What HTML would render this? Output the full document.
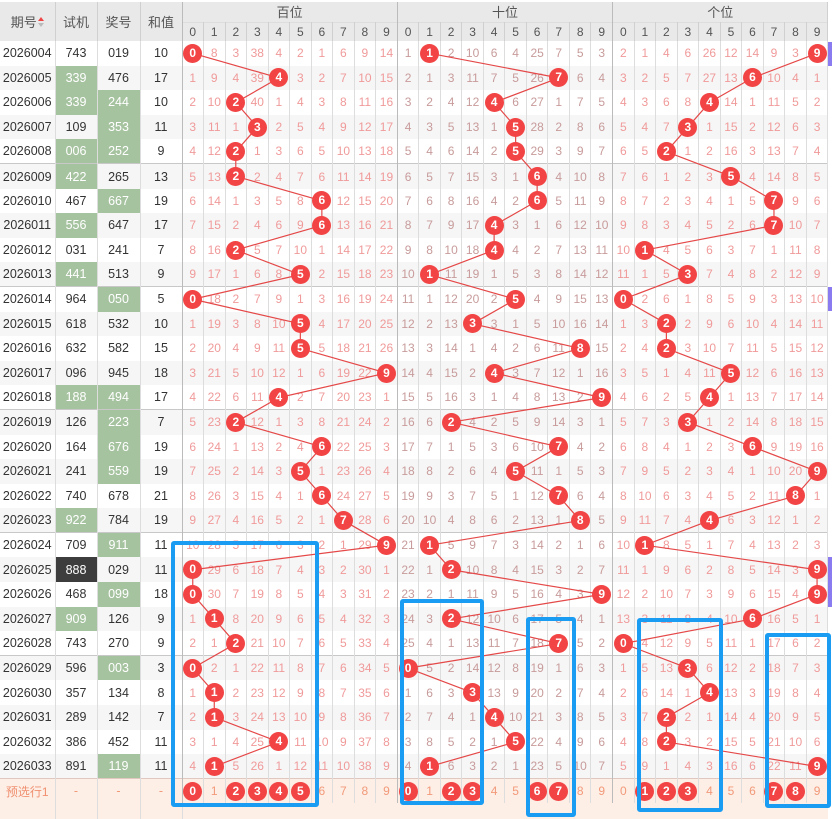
<!DOCTYPE html>
<html><head><meta charset="utf-8">
<style>
*{margin:0;padding:0;box-sizing:border-box}
body{width:832px;height:814px;overflow:hidden;background:#fff;font-family:"Liberation Sans","Noto Sans CJK SC",sans-serif;position:relative}
table{border-collapse:collapse;table-layout:fixed;width:828px;position:absolute;left:0;top:2px}
td,th{text-align:center;font-size:12px;padding:0;border-right:1px solid #ddd;white-space:nowrap;overflow:visible}
th{background:#e9e9e9;color:#555;font-weight:normal;border-right:1px solid #d0d0d0}
tr.h1 th{height:20px;font-size:13px}
tr.h2 th{height:19px;font-size:12px;border-top:1px solid #ddd}
tr.d td{height:24.6px;color:#f09a9a}
tr.d td:nth-child(-n+4){color:#333;font-size:12.5px}
tr.d:nth-child(even) td{background:#f6f6f6}
tr.d td:nth-child(n+15):nth-child(-n+24){color:#c89b9b}
tr.d td:nth-child(14),tr.d td:nth-child(24),th.gs{border-right:1px solid #bbb}
tr.d td:nth-child(4){border-right:1px solid #bbb}
tr.s td{border-top:1px solid #c8c8c8}
tr.d td.g{background:#a6c3a0 !important;color:#fff !important}
tr.d td.k{background:#3d3d3d !important;color:#fff !important}
td b{display:inline-block;width:19px;height:19px;border-radius:50%;background:#f24444;color:#fff;line-height:19px;font-size:12px;font-weight:bold;position:relative;z-index:2}
tr.p td{background:#fdeee6 !important;color:#f29a7a !important;border-top:1px solid #e0c8c0}
tr.p td:first-child{color:#f09070 !important;font-size:12px}
tr.e td{background:#fdeee6;height:16px}
.arr{display:inline-block;width:6px;vertical-align:middle;margin-left:1px}
svg#ln{position:absolute;left:0;top:0;z-index:1;pointer-events:none}
.bx{position:absolute;border:4px solid #1a9cf2;border-radius:3px;z-index:3}
.pu{position:absolute;left:828px;width:4px;background:#8a7cf0}
</style></head><body>
<svg id="ln" width="832" height="814"></svg>
<table>
<colgroup><col style="width:55px"><col style="width:42px"><col style="width:43px"><col style="width:42px">
<col span="30" style="width:21.53px"></colgroup>
<tr class="h1"><th rowspan="2">期号<span class="arr"><svg width="6" height="12"><path d="M0 5L3 1L6 5Z" fill="#e44"/><path d="M0 7L3 11L6 7Z" fill="#bbb"/></svg></span></th><th rowspan="2">试机</th><th rowspan="2">奖号</th><th rowspan="2" class="gs">和值</th><th colspan="10" class="gs">百位</th><th colspan="10" class="gs">十位</th><th colspan="10">个位</th></tr>
<tr class="h2"><th>0</th><th>1</th><th>2</th><th>3</th><th>4</th><th>5</th><th>6</th><th>7</th><th>8</th><th class="gs">9</th><th>0</th><th>1</th><th>2</th><th>3</th><th>4</th><th>5</th><th>6</th><th>7</th><th>8</th><th class="gs">9</th><th>0</th><th>1</th><th>2</th><th>3</th><th>4</th><th>5</th><th>6</th><th>7</th><th>8</th><th>9</th></tr>
<tr class="d"><td>2026004</td><td>743</td><td>019</td><td>10</td><td><b>0</b></td><td>8</td><td>3</td><td>38</td><td>4</td><td>2</td><td>1</td><td>6</td><td>9</td><td>14</td><td>1</td><td><b>1</b></td><td>2</td><td>10</td><td>6</td><td>4</td><td>25</td><td>7</td><td>5</td><td>3</td><td>2</td><td>1</td><td>4</td><td>6</td><td>26</td><td>12</td><td>14</td><td>9</td><td>3</td><td><b>9</b></td></tr>
<tr class="d"><td>2026005</td><td class="g">339</td><td>476</td><td>17</td><td>1</td><td>9</td><td>4</td><td>39</td><td><b>4</b></td><td>3</td><td>2</td><td>7</td><td>10</td><td>15</td><td>2</td><td>1</td><td>3</td><td>11</td><td>7</td><td>5</td><td>26</td><td><b>7</b></td><td>6</td><td>4</td><td>3</td><td>2</td><td>5</td><td>7</td><td>27</td><td>13</td><td><b>6</b></td><td>10</td><td>4</td><td>1</td></tr>
<tr class="d"><td>2026006</td><td class="g">339</td><td class="g">244</td><td>10</td><td>2</td><td>10</td><td><b>2</b></td><td>40</td><td>1</td><td>4</td><td>3</td><td>8</td><td>11</td><td>16</td><td>3</td><td>2</td><td>4</td><td>12</td><td><b>4</b></td><td>6</td><td>27</td><td>1</td><td>7</td><td>5</td><td>4</td><td>3</td><td>6</td><td>8</td><td><b>4</b></td><td>14</td><td>1</td><td>11</td><td>5</td><td>2</td></tr>
<tr class="d"><td>2026007</td><td>109</td><td class="g">353</td><td>11</td><td>3</td><td>11</td><td>1</td><td><b>3</b></td><td>2</td><td>5</td><td>4</td><td>9</td><td>12</td><td>17</td><td>4</td><td>3</td><td>5</td><td>13</td><td>1</td><td><b>5</b></td><td>28</td><td>2</td><td>8</td><td>6</td><td>5</td><td>4</td><td>7</td><td><b>3</b></td><td>1</td><td>15</td><td>2</td><td>12</td><td>6</td><td>3</td></tr>
<tr class="d"><td>2026008</td><td class="g">006</td><td class="g">252</td><td>9</td><td>4</td><td>12</td><td><b>2</b></td><td>1</td><td>3</td><td>6</td><td>5</td><td>10</td><td>13</td><td>18</td><td>5</td><td>4</td><td>6</td><td>14</td><td>2</td><td><b>5</b></td><td>29</td><td>3</td><td>9</td><td>7</td><td>6</td><td>5</td><td><b>2</b></td><td>1</td><td>2</td><td>16</td><td>3</td><td>13</td><td>7</td><td>4</td></tr>
<tr class="d s"><td>2026009</td><td class="g">422</td><td>265</td><td>13</td><td>5</td><td>13</td><td><b>2</b></td><td>2</td><td>4</td><td>7</td><td>6</td><td>11</td><td>14</td><td>19</td><td>6</td><td>5</td><td>7</td><td>15</td><td>3</td><td>1</td><td><b>6</b></td><td>4</td><td>10</td><td>8</td><td>7</td><td>6</td><td>1</td><td>2</td><td>3</td><td><b>5</b></td><td>4</td><td>14</td><td>8</td><td>5</td></tr>
<tr class="d"><td>2026010</td><td>467</td><td class="g">667</td><td>19</td><td>6</td><td>14</td><td>1</td><td>3</td><td>5</td><td>8</td><td><b>6</b></td><td>12</td><td>15</td><td>20</td><td>7</td><td>6</td><td>8</td><td>16</td><td>4</td><td>2</td><td><b>6</b></td><td>5</td><td>11</td><td>9</td><td>8</td><td>7</td><td>2</td><td>3</td><td>4</td><td>1</td><td>5</td><td><b>7</b></td><td>9</td><td>6</td></tr>
<tr class="d"><td>2026011</td><td class="g">556</td><td>647</td><td>17</td><td>7</td><td>15</td><td>2</td><td>4</td><td>6</td><td>9</td><td><b>6</b></td><td>13</td><td>16</td><td>21</td><td>8</td><td>7</td><td>9</td><td>17</td><td><b>4</b></td><td>3</td><td>1</td><td>6</td><td>12</td><td>10</td><td>9</td><td>8</td><td>3</td><td>4</td><td>5</td><td>2</td><td>6</td><td><b>7</b></td><td>10</td><td>7</td></tr>
<tr class="d"><td>2026012</td><td>031</td><td>241</td><td>7</td><td>8</td><td>16</td><td><b>2</b></td><td>5</td><td>7</td><td>10</td><td>1</td><td>14</td><td>17</td><td>22</td><td>9</td><td>8</td><td>10</td><td>18</td><td><b>4</b></td><td>4</td><td>2</td><td>7</td><td>13</td><td>11</td><td>10</td><td><b>1</b></td><td>4</td><td>5</td><td>6</td><td>3</td><td>7</td><td>1</td><td>11</td><td>8</td></tr>
<tr class="d"><td>2026013</td><td class="g">441</td><td>513</td><td>9</td><td>9</td><td>17</td><td>1</td><td>6</td><td>8</td><td><b>5</b></td><td>2</td><td>15</td><td>18</td><td>23</td><td>10</td><td><b>1</b></td><td>11</td><td>19</td><td>1</td><td>5</td><td>3</td><td>8</td><td>14</td><td>12</td><td>11</td><td>1</td><td>5</td><td><b>3</b></td><td>7</td><td>4</td><td>8</td><td>2</td><td>12</td><td>9</td></tr>
<tr class="d s"><td>2026014</td><td>964</td><td class="g">050</td><td>5</td><td><b>0</b></td><td>18</td><td>2</td><td>7</td><td>9</td><td>1</td><td>3</td><td>16</td><td>19</td><td>24</td><td>11</td><td>1</td><td>12</td><td>20</td><td>2</td><td><b>5</b></td><td>4</td><td>9</td><td>15</td><td>13</td><td><b>0</b></td><td>2</td><td>6</td><td>1</td><td>8</td><td>5</td><td>9</td><td>3</td><td>13</td><td>10</td></tr>
<tr class="d"><td>2026015</td><td>618</td><td>532</td><td>10</td><td>1</td><td>19</td><td>3</td><td>8</td><td>10</td><td><b>5</b></td><td>4</td><td>17</td><td>20</td><td>25</td><td>12</td><td>2</td><td>13</td><td><b>3</b></td><td>3</td><td>1</td><td>5</td><td>10</td><td>16</td><td>14</td><td>1</td><td>3</td><td><b>2</b></td><td>2</td><td>9</td><td>6</td><td>10</td><td>4</td><td>14</td><td>11</td></tr>
<tr class="d"><td>2026016</td><td>632</td><td>582</td><td>15</td><td>2</td><td>20</td><td>4</td><td>9</td><td>11</td><td><b>5</b></td><td>5</td><td>18</td><td>21</td><td>26</td><td>13</td><td>3</td><td>14</td><td>1</td><td>4</td><td>2</td><td>6</td><td>11</td><td><b>8</b></td><td>15</td><td>2</td><td>4</td><td><b>2</b></td><td>3</td><td>10</td><td>7</td><td>11</td><td>5</td><td>15</td><td>12</td></tr>
<tr class="d"><td>2026017</td><td>096</td><td>945</td><td>18</td><td>3</td><td>21</td><td>5</td><td>10</td><td>12</td><td>1</td><td>6</td><td>19</td><td>22</td><td><b>9</b></td><td>14</td><td>4</td><td>15</td><td>2</td><td><b>4</b></td><td>3</td><td>7</td><td>12</td><td>1</td><td>16</td><td>3</td><td>5</td><td>1</td><td>4</td><td>11</td><td><b>5</b></td><td>12</td><td>6</td><td>16</td><td>13</td></tr>
<tr class="d"><td>2026018</td><td class="g">188</td><td class="g">494</td><td>17</td><td>4</td><td>22</td><td>6</td><td>11</td><td><b>4</b></td><td>2</td><td>7</td><td>20</td><td>23</td><td>1</td><td>15</td><td>5</td><td>16</td><td>3</td><td>1</td><td>4</td><td>8</td><td>13</td><td>2</td><td><b>9</b></td><td>4</td><td>6</td><td>2</td><td>5</td><td><b>4</b></td><td>1</td><td>13</td><td>7</td><td>17</td><td>14</td></tr>
<tr class="d s"><td>2026019</td><td>126</td><td class="g">223</td><td>7</td><td>5</td><td>23</td><td><b>2</b></td><td>12</td><td>1</td><td>3</td><td>8</td><td>21</td><td>24</td><td>2</td><td>16</td><td>6</td><td><b>2</b></td><td>4</td><td>2</td><td>5</td><td>9</td><td>14</td><td>3</td><td>1</td><td>5</td><td>7</td><td>3</td><td><b>3</b></td><td>1</td><td>2</td><td>14</td><td>8</td><td>18</td><td>15</td></tr>
<tr class="d"><td>2026020</td><td>164</td><td class="g">676</td><td>19</td><td>6</td><td>24</td><td>1</td><td>13</td><td>2</td><td>4</td><td><b>6</b></td><td>22</td><td>25</td><td>3</td><td>17</td><td>7</td><td>1</td><td>5</td><td>3</td><td>6</td><td>10</td><td><b>7</b></td><td>4</td><td>2</td><td>6</td><td>8</td><td>4</td><td>1</td><td>2</td><td>3</td><td><b>6</b></td><td>9</td><td>19</td><td>16</td></tr>
<tr class="d"><td>2026021</td><td>241</td><td class="g">559</td><td>19</td><td>7</td><td>25</td><td>2</td><td>14</td><td>3</td><td><b>5</b></td><td>1</td><td>23</td><td>26</td><td>4</td><td>18</td><td>8</td><td>2</td><td>6</td><td>4</td><td><b>5</b></td><td>11</td><td>1</td><td>5</td><td>3</td><td>7</td><td>9</td><td>5</td><td>2</td><td>3</td><td>4</td><td>1</td><td>10</td><td>20</td><td><b>9</b></td></tr>
<tr class="d"><td>2026022</td><td>740</td><td>678</td><td>21</td><td>8</td><td>26</td><td>3</td><td>15</td><td>4</td><td>1</td><td><b>6</b></td><td>24</td><td>27</td><td>5</td><td>19</td><td>9</td><td>3</td><td>7</td><td>5</td><td>1</td><td>12</td><td><b>7</b></td><td>6</td><td>4</td><td>8</td><td>10</td><td>6</td><td>3</td><td>4</td><td>5</td><td>2</td><td>11</td><td><b>8</b></td><td>1</td></tr>
<tr class="d"><td>2026023</td><td class="g">922</td><td>784</td><td>19</td><td>9</td><td>27</td><td>4</td><td>16</td><td>5</td><td>2</td><td>1</td><td><b>7</b></td><td>28</td><td>6</td><td>20</td><td>10</td><td>4</td><td>8</td><td>6</td><td>2</td><td>13</td><td>1</td><td><b>8</b></td><td>5</td><td>9</td><td>11</td><td>7</td><td>4</td><td><b>4</b></td><td>6</td><td>3</td><td>12</td><td>1</td><td>2</td></tr>
<tr class="d s"><td>2026024</td><td>709</td><td class="g">911</td><td>11</td><td>10</td><td>28</td><td>5</td><td>17</td><td>6</td><td>3</td><td>2</td><td>1</td><td>29</td><td><b>9</b></td><td>21</td><td><b>1</b></td><td>5</td><td>9</td><td>7</td><td>3</td><td>14</td><td>2</td><td>1</td><td>6</td><td>10</td><td><b>1</b></td><td>8</td><td>5</td><td>1</td><td>7</td><td>4</td><td>13</td><td>2</td><td>3</td></tr>
<tr class="d"><td>2026025</td><td class="k">888</td><td>029</td><td>11</td><td><b>0</b></td><td>29</td><td>6</td><td>18</td><td>7</td><td>4</td><td>3</td><td>2</td><td>30</td><td>1</td><td>22</td><td>1</td><td><b>2</b></td><td>10</td><td>8</td><td>4</td><td>15</td><td>3</td><td>2</td><td>7</td><td>11</td><td>1</td><td>9</td><td>6</td><td>2</td><td>8</td><td>5</td><td>14</td><td>3</td><td><b>9</b></td></tr>
<tr class="d"><td>2026026</td><td>468</td><td class="g">099</td><td>18</td><td><b>0</b></td><td>30</td><td>7</td><td>19</td><td>8</td><td>5</td><td>4</td><td>3</td><td>31</td><td>2</td><td>23</td><td>2</td><td>1</td><td>11</td><td>9</td><td>5</td><td>16</td><td>4</td><td>3</td><td><b>9</b></td><td>12</td><td>2</td><td>10</td><td>7</td><td>3</td><td>9</td><td>6</td><td>15</td><td>4</td><td><b>9</b></td></tr>
<tr class="d"><td>2026027</td><td class="g">909</td><td>126</td><td>9</td><td>1</td><td><b>1</b></td><td>8</td><td>20</td><td>9</td><td>6</td><td>5</td><td>4</td><td>32</td><td>3</td><td>24</td><td>3</td><td><b>2</b></td><td>12</td><td>10</td><td>6</td><td>17</td><td>5</td><td>4</td><td>1</td><td>13</td><td>3</td><td>11</td><td>8</td><td>4</td><td>10</td><td><b>6</b></td><td>16</td><td>5</td><td>1</td></tr>
<tr class="d"><td>2026028</td><td>743</td><td>270</td><td>9</td><td>2</td><td>1</td><td><b>2</b></td><td>21</td><td>10</td><td>7</td><td>6</td><td>5</td><td>33</td><td>4</td><td>25</td><td>4</td><td>1</td><td>13</td><td>11</td><td>7</td><td>18</td><td><b>7</b></td><td>5</td><td>2</td><td><b>0</b></td><td>4</td><td>12</td><td>9</td><td>5</td><td>11</td><td>1</td><td>17</td><td>6</td><td>2</td></tr>
<tr class="d s"><td>2026029</td><td>596</td><td class="g">003</td><td>3</td><td><b>0</b></td><td>2</td><td>1</td><td>22</td><td>11</td><td>8</td><td>7</td><td>6</td><td>34</td><td>5</td><td><b>0</b></td><td>5</td><td>2</td><td>14</td><td>12</td><td>8</td><td>19</td><td>1</td><td>6</td><td>3</td><td>1</td><td>5</td><td>13</td><td><b>3</b></td><td>6</td><td>12</td><td>2</td><td>18</td><td>7</td><td>3</td></tr>
<tr class="d"><td>2026030</td><td>357</td><td>134</td><td>8</td><td>1</td><td><b>1</b></td><td>2</td><td>23</td><td>12</td><td>9</td><td>8</td><td>7</td><td>35</td><td>6</td><td>1</td><td>6</td><td>3</td><td><b>3</b></td><td>13</td><td>9</td><td>20</td><td>2</td><td>7</td><td>4</td><td>2</td><td>6</td><td>14</td><td>1</td><td><b>4</b></td><td>13</td><td>3</td><td>19</td><td>8</td><td>4</td></tr>
<tr class="d"><td>2026031</td><td>289</td><td>142</td><td>7</td><td>2</td><td><b>1</b></td><td>3</td><td>24</td><td>13</td><td>10</td><td>9</td><td>8</td><td>36</td><td>7</td><td>2</td><td>7</td><td>4</td><td>1</td><td><b>4</b></td><td>10</td><td>21</td><td>3</td><td>8</td><td>5</td><td>3</td><td>7</td><td><b>2</b></td><td>2</td><td>1</td><td>14</td><td>4</td><td>20</td><td>9</td><td>5</td></tr>
<tr class="d"><td>2026032</td><td>386</td><td>452</td><td>11</td><td>3</td><td>1</td><td>4</td><td>25</td><td><b>4</b></td><td>11</td><td>10</td><td>9</td><td>37</td><td>8</td><td>3</td><td>8</td><td>5</td><td>2</td><td>1</td><td><b>5</b></td><td>22</td><td>4</td><td>9</td><td>6</td><td>4</td><td>8</td><td><b>2</b></td><td>3</td><td>2</td><td>15</td><td>5</td><td>21</td><td>10</td><td>6</td></tr>
<tr class="d"><td>2026033</td><td>891</td><td class="g">119</td><td>11</td><td>4</td><td><b>1</b></td><td>5</td><td>26</td><td>1</td><td>12</td><td>11</td><td>10</td><td>38</td><td>9</td><td>4</td><td><b>1</b></td><td>6</td><td>3</td><td>2</td><td>1</td><td>23</td><td>5</td><td>10</td><td>7</td><td>5</td><td>9</td><td>1</td><td>4</td><td>3</td><td>16</td><td>6</td><td>22</td><td>11</td><td><b>9</b></td></tr>
<tr class="d p"><td>预选行1</td><td>-</td><td>-</td><td>-</td><td><b>0</b></td><td>1</td><td><b>2</b></td><td><b>3</b></td><td><b>4</b></td><td><b>5</b></td><td>6</td><td>7</td><td>8</td><td>9</td><td><b>0</b></td><td>1</td><td><b>2</b></td><td><b>3</b></td><td>4</td><td>5</td><td><b>6</b></td><td><b>7</b></td><td>8</td><td>9</td><td>0</td><td><b>1</b></td><td><b>2</b></td><td><b>3</b></td><td>4</td><td>5</td><td>6</td><td><b>7</b></td><td><b>8</b></td><td>9</td></tr>
<tr class="e"><td></td><td></td><td></td><td></td><td colspan="30" style="border-right:none"></td></tr>
</table>
<div class="pu" style="top:42px;height:24px"></div>
<div class="pu" style="top:287px;height:24px"></div>
<div class="pu" style="top:557px;height:50px"></div>
<div class="bx" style="left:171px;top:541px;width:148px;height:266px"></div>
<div class="bx" style="left:400px;top:599px;width:84px;height:206px"></div>
<div class="bx" style="left:526px;top:617px;width:50px;height:200px"></div>
<div class="bx" style="left:637px;top:618px;width:86px;height:194px"></div>
<div class="bx" style="left:765px;top:633px;width:66px;height:175px"></div>
<script>
(function(){
var svg=document.getElementById('ln');
var rows=document.querySelectorAll('tr.d:not(.p)');
var prev=[null,null,null];var s='';
rows.forEach(function(r){
 var tds=r.children;
 for(var g=0;g<3;g++){
  for(var i=0;i<10;i++){
   var td=tds[4+g*10+i];
   if(td&&td.querySelector('b')){
    var rc=td.getBoundingClientRect();
    var p=[rc.left+rc.width/2,rc.top+rc.height/2];
    if(prev[g])s+='<line x1="'+prev[g][0]+'" y1="'+prev[g][1]+'" x2="'+p[0]+'" y2="'+p[1]+'" stroke="#e54848" stroke-width="1.2"/>';
    prev[g]=p;
   }
  }
 }
});
svg.innerHTML=s;
})();
</script>
</body></html>
